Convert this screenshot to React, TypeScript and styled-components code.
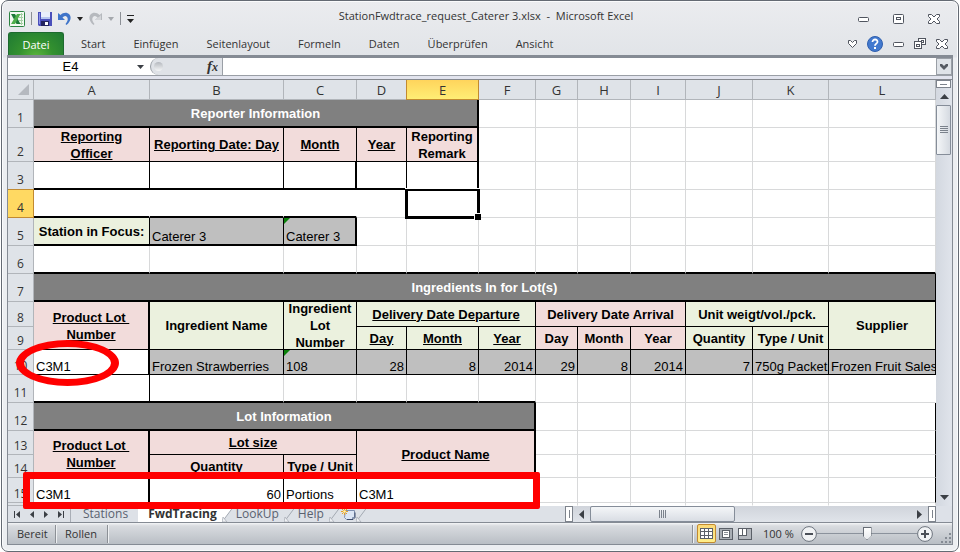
import React from 'react';
import styled, { createGlobalStyle, css } from 'styled-components';

const UI = '"Open Sans", "Noto Sans", sans-serif';
const SHEET = '"Liberation Sans", Arial, sans-serif';
const GRAY = '#808080';
const PINK = '#f2dcdb';
const GREEN = '#ebf1de';
const SILVER = '#bfbfbf';
const GRIDLINE = '#d8d9da';

const GlobalStyle = createGlobalStyle`
  * { box-sizing: border-box; }
  body { margin: 0; background: #fff; font-family: ${UI}; font-size: 11px; color: #333; }
  button, input { font: inherit; color: inherit; margin: 0; padding: 0; border: 0; background: none; }
  svg { display: block; flex: none; }
`;

/* ---------- window ---------- */

const Frame = styled.div`
  min-height: 100vh;
  margin: 0 1px;
  padding: 0 5px 6px;
  display: flex;
  flex-direction: column;
  border: 1px solid #646a73;
  border-radius: 7px;
  background: linear-gradient(#ebecef, #e1e4e8 56px, #eceef1 57px);
  box-shadow: inset 0 0 0 1px #fafbfc;
`;

const TitleBar = styled.header`
  display: flex;
  align-items: center;
  height: 31px;
  padding: 4px 13px 0 2px;
`;

const QuickAccess = styled.div`
  display: flex;
  align-items: center;
  gap: 6px;
`;

const Title = styled.h1`
  flex: 1;
  margin: 0 0 6px;
  padding-right: 20px;
  text-align: center;
  font-weight: 400;
  font-size: 11px;
  line-height: 16px;
  white-space: nowrap;
`;

const IconButton = styled.button`
  display: flex;
  align-items: center;
  justify-content: center;
`;

const WindowButtons = styled.div<{ $gap: number }>`
  display: flex;
  align-items: center;
  gap: ${(p) => p.$gap}px;
  margin-left: auto;
`;

const Divider = styled.span<{ $h: number; $dark?: boolean }>`
  width: 1px;
  height: ${(p) => p.$h}px;
  background: #8c9096;
  ${(p) => p.$dark && css`box-shadow: 1px 0 0 #eef0f2;`}
`;

const Ribbon = styled.nav`
  display: flex;
  align-items: stretch;
  height: 23px;
  padding: 0 5px 0 1px;
`;

const FileTab = styled.button`
  width: 56px;
  margin-right: 3px;
  border: 1px solid #1d6a2f;
  border-bottom: 0;
  border-radius: 3px 3px 0 0;
  background: radial-gradient(ellipse at 50% 110%, #5bb53c 0%, #34912f 45%, #1f7a33 100%);
  color: #fff;
  font-size: 11px;
`;

const RibbonTab = styled.button`
  padding: 0 14px;
  font-size: 11px;
  white-space: nowrap;
`;

const Client = styled.main`
  flex: 1;
  display: flex;
  flex-direction: column;
  border: solid #858b94;
  border-width: 3px 1px 1px;
`;

/* ---------- formula bar ---------- */

const FormulaBar = styled.div`
  display: flex;
  height: 22px;
  padding-bottom: 2px;
  background: #e2e4ee;
  border-bottom: 1px solid #85888f;
`;

const BarInner = styled.div`
  flex: 1;
  display: flex;
  height: 18px;
  border-bottom: 1px solid #9a9fa6;
  background: #fff;
`;

const NameBox = styled.div`
  display: flex;
  align-items: center;
  width: 141px;
  padding-right: 5px;
`;

const NameInput = styled.input`
  flex: 1;
  min-width: 0;
  && { padding-right: 4px; }
  text-align: center;
  font: 13px/17px ${SHEET};
  color: #000;
`;

const FxArea = styled.div`
  display: flex;
  align-items: center;
  justify-content: space-between;
  width: 73px;
  margin-left: 1px;
  padding: 0 4px 0 3px;
  border: solid #9a9fa6;
  border-width: 0 1px 0 1px;
  border-radius: 9px 0 0 9px;
  background: #dfe2e7;
`;

const Knob = styled.span`
  width: 9px;
  height: 9px;
  border-radius: 50%;
  background: linear-gradient(#b4b8be, #f5f6f7);
`;

const Fx = styled.button`
  font: italic bold 15px/16px "Liberation Serif", serif;
  color: #333;
  small { font-size: 12px; }
`;

const FormulaInput = styled.input`
  flex: 1;
  min-width: 0;
  font: 13px/17px ${SHEET};
`;

const ExpandButton = styled(IconButton)`
  width: 16px;
  border: 1px solid #9a9fa6;
  background: #dfe3e8;
`;

/* ---------- sheet ---------- */

const Workbook = styled.section`
  position: relative;
  display: flex;
  flex: 1;
`;

const SheetPane = styled.div`
  flex: 1;
  min-width: 0;
  overflow: hidden;
  background: #fff;
`;

const Grid = styled.table`
  width: 100%;
  table-layout: fixed;
  border-collapse: separate;
  border-spacing: 0;
  font: 13px/15px ${SHEET};
  color: #000;
`;

const Col = styled.col<{ $w?: number }>`
  ${(p) => p.$w && css`width: ${p.$w}px;`}
`;

const Row = styled.tr<{ $h: number }>`
  height: ${(p) => p.$h}px;
`;

const Heading = styled.th<{ $active?: boolean }>`
  padding: 0;
  font: 400 13px/18px ${UI};
  color: #333;
  background: #dfe3e8;
  border: solid #b1b5ba;
  border-width: 0 1px 1px 0;
`;

const ColumnHeading = styled(Heading)`
  ${(p) => p.$active && css`
    background: linear-gradient(#ffd45c, #ffee75);
    border-color: #c28a30;
    box-shadow: -1px 0 0 #c28a30;
  `}
`;

const RowHeading = styled(Heading)<{ $low?: boolean }>`
  vertical-align: bottom;
  font-size: 12px;
  line-height: 17px;
  padding: 0 0 ${(p) => (p.$low ? 0 : 1)}px;
  ${(p) => p.$active && css`
    background: #ffd962;
    border-color: #c28a30;
    box-shadow: 0 -1px 0 #c28a30;
  `}
`;

type Edge = 0 | 1 | 2 | 'g';
const edge = (e: Edge) =>
  e === 'g' ? `1px solid ${GRIDLINE}` : e === 0 ? '1px solid #fff' : `${e}px solid #000`;

const Cell = styled.td<{ $bg?: string; $r: Edge; $b: Edge; $align?: string; $head?: boolean; $selected?: boolean }>`
  position: relative;
  padding: 0 2px;
  white-space: pre;
  overflow: ${(p) => (p.$selected ? 'visible' : 'hidden')};
  background: ${(p) => p.$bg || '#fff'};
  color: ${(p) => (p.$bg === GRAY ? '#fff' : '#000')};
  border-right: ${(p) => edge(p.$r)};
  border-bottom: ${(p) => edge(p.$b)};
  text-align: ${(p) => p.$align || 'left'};
  vertical-align: ${(p) => (p.$head ? 'middle' : 'bottom')};
`;

const Caption = styled.div<{ $underline?: boolean }>`
  margin: -3px 0;
  font-weight: 700;
  line-height: 17px;
  text-decoration: ${(p) => (p.$underline ? 'underline' : 'none')};
`;

const ErrorFlag = styled.span`
  position: absolute;
  top: 0;
  left: 0;
  width: 6px;
  height: 6px;
  background: #0a800a;
  clip-path: polygon(0 0, 100% 0, 0 100%);
`;

const Selection = styled.span`
  position: absolute;
  z-index: 2;
  inset: -1px -2px -2px -2px;
  border: 3px solid #000;
  border-top-width: 2px;
  box-shadow: 0 -1px 0 #fff;
  &::after {
    content: '';
    position: absolute;
    right: -4px;
    bottom: -4px;
    width: 6px;
    height: 6px;
    background: #000;
    border: solid #fff;
    border-width: 1px 0 0 1px;
  }
`;

const EllipseMark = styled.span`
  position: absolute;
  z-index: 3;
  left: 8px;
  top: 260px;
  width: 103px;
  height: 46px;
  border: solid #f00;
  border-width: 7px 8px;
  border-radius: 50%;
`;

const BoxMark = styled.span`
  position: absolute;
  z-index: 3;
  left: 15px;
  top: 392px;
  width: 517px;
  height: 37px;
  border: 7px solid #f00;
  border-radius: 2px;
`;

/* ---------- scrolling ---------- */

const VScroll = styled.div`
  display: flex;
  flex-direction: column;
  width: 16px;
  background: linear-gradient(90deg, #d3d8e0, #e0e4eb);
`;

const SplitHandle = styled.span<{ $vertical?: boolean }>`
  flex: none;
  width: ${(p) => (p.$vertical ? 8 : 15)}px;
  height: ${(p) => (p.$vertical ? 16 : 8)}px;
  border: 1px solid #7d838c;
  background: #fff;
  display: flex;
  align-items: center;
  justify-content: center;
  &::after {
    content: '';
    width: ${(p) => (p.$vertical ? 1 : 7)}px;
    height: ${(p) => (p.$vertical ? 8 : 1)}px;
    background: #7d838c;
  }
`;

const VArrow = styled(IconButton)`
  height: 17px;
`;

const VThumb = styled.div`
  display: flex;
  align-items: center;
  justify-content: center;
  height: 50px;
  width: 15px;
  border: 1px solid #858d99;
  border-radius: 1px;
  background: linear-gradient(90deg, #f4f6f8, #d5dae1);
`;

const Spacer = styled.span`
  flex: 1;
`;

const BottomBar = styled.div`
  display: flex;
  height: 16px;
  background: #dde1e7;
`;

const SheetNav = styled.div`
  display: flex;
  align-items: center;
  justify-content: space-between;
  width: 62px;
  padding: 0 6px;
`;

const SheetTabs = styled.div`
  display: flex;
  flex: 1;
  min-width: 0;
  border-left: 1px solid #a9aeb6;
`;

const SheetTab = styled.button<{ $active?: boolean; $first?: boolean }>`
  padding: 0 ${(p) => (p.$first ? 10 : 5)}px 0 ${(p) => (p.$active ? 10 : p.$first ? 12 : 2)}px;
  font-size: 12px;
  line-height: 16px;
  color: ${(p) => (p.$active ? '#333' : '#5a6270')};
  font-weight: ${(p) => (p.$active ? 700 : 400)};
  background: ${(p) => (p.$active ? '#fff' : 'transparent')};
`;

const HScroll = styled.div`
  display: flex;
  width: 371px;
  background: linear-gradient(#d0d4db, #e0e4ea);
`;

const HArrow = styled(IconButton)`
  width: 17px;
`;

const HThumb = styled.div`
  display: flex;
  align-items: center;
  justify-content: center;
  width: 145px;
  border: 1px solid #858d99;
  border-radius: 2px;
  background: linear-gradient(#f4f6f8, #d9dde4);
`;

const ScrollCorner = styled.span`
  width: 16px;
  background: #dde1e8;
`;

/* ---------- status bar ---------- */

const StatusBar = styled.footer`
  display: flex;
  align-items: center;
  height: 22px;
  padding-left: 9px;
  border-top: 1px solid #858b94;
  background: linear-gradient(#f4f5f7, #d8dbdf 3px, #b9bec4);
  font-size: 11px;
`;

const StatusText = styled.span<{ $w: number; $pad?: number }>`
  width: ${(p) => p.$w}px;
  padding-left: ${(p) => p.$pad || 0}px;
`;

const ViewButtons = styled.div`
  display: flex;
  align-items: center;
  padding-left: 4px;
`;

const ViewButton = styled(IconButton)<{ $active?: boolean }>`
  width: 19px;
  height: 19px;
  ${(p) => p.$active && css`
    border: 1px solid #c28a30;
    border-radius: 2px;
    background: linear-gradient(#fbd977, #ffee8a);
  `}
`;

const ZoomLabel = styled.label`
  width: 47px;
  padding-left: 9px;
  white-space: nowrap;
`;

const ZoomSlider = styled.input`
  appearance: none;
  width: 100px;
  height: 18px;
  background: linear-gradient(#8b929c, #8b929c) center / 100% 1px no-repeat;
  &::-webkit-slider-thumb {
    appearance: none;
    width: 9px;
    height: 13px;
    background: linear-gradient(#fff, #e8eaed) center / 7px 11px no-repeat #666c75;
    clip-path: polygon(0 0, 100% 0, 100% 65%, 50% 100%, 0 65%);
  }
`;

const ResizeCorner = styled.span`
  display: flex;
  align-self: flex-end;
  padding-left: 8px;
`;

/* ---------- icons ---------- */

const Triangle = ({ d, w, h, fill = '#3b3f45' }: { d: string; w: number; h: number; fill?: string }) => (
  <svg width={w} height={h} aria-hidden="true"><path d={d} fill={fill} /></svg>
);

const Down = ({ fill = '#222' }: { fill?: string }) => <Triangle d="M0 0H6L3 4Z" w={6} h={4} fill={fill} />;

const ExcelIcon = () => (
  <svg width="16" height="16" aria-hidden="true">
    <rect x=".5" y=".5" width="15" height="15" rx="1" fill="#f3f9f1" stroke="#2d8442" />
    <path d="M10 3.500h4M10 6.500h4M10 9.500h4M10 12.500h4M12.500 2v12" stroke="#a6cfa5" />
    <path d="M2 3H6l5.500 10H7.500Z" fill="#1e7b38" />
    <path d="M11.500 3H8L2 13h4Z" fill="#4fae4b" />
  </svg>
);

const SaveIcon = () => (
  <svg width="14" height="14" aria-hidden="true">
    <path d="M0 0h14v14H1L0 13Z" fill="#4a4fbb" />
    <path d="M1 1h1v11H1Z" fill="#8b92e6" />
    <path d="M3 0h9v7H3Z" fill="#e9eefb" />
    <path d="M3 5h9v2H3Z" fill="#b6c5ee" />
    <path d="M3 9h8v5H3Z" fill="#23245f" />
    <path d="M7 10h3v3H7Z" fill="#fff" />
  </svg>
);

const UndoIcon = ({ redo }: { redo?: boolean }) => (
  <svg width="13" height="13" viewBox="0 0 13 13" aria-hidden="true">
    <g transform={redo ? 'translate(13 0) scale(-1 1)' : undefined} fill={redo ? '#b6b9be' : '#3f74c9'}>
      <path d="M0 1l2.500 2C5 .5 9 0 11.500 2.500c2 2.500 1.500 7-3 10.500l-1-1C9.500 9.500 10.500 7 9 5 7.500 3.500 6 4 4.500 5.500L7 8H0Z" />
      {redo && <path d="M4.500 5.500 7 8H1V3l2 2Z" fill="#d3d5d9" />}
    </g>
  </svg>
);

const MinimizeIcon = () => (
  <svg width="11" height="11" aria-hidden="true"><rect x=".5" y="4.500" width="10" height="4" rx="1" fill="#fff" stroke="#50555f" /></svg>
);

const MaximizeIcon = () => (
  <svg width="11" height="10" aria-hidden="true">
    <rect x=".5" y=".5" width="10" height="9" rx="1" fill="#fff" stroke="#50555f" />
    <rect x="3.500" y="3.500" width="4" height="2" fill="none" stroke="#50555f" />
  </svg>
);

const RestoreIcon = () => (
  <svg width="12" height="11" aria-hidden="true">
    <rect x="4.500" y=".5" width="7" height="6" fill="#fff" stroke="#50555f" />
    <rect x="7.500" y="2.500" width="2" height="2" fill="none" stroke="#50555f" />
    <rect x=".5" y="3.500" width="7" height="7" fill="#fff" stroke="#50555f" />
    <rect x="2.500" y="6.500" width="3" height="2" fill="none" stroke="#50555f" />
  </svg>
);

const CloseIcon = () => (
  <svg width="12" height="10" aria-hidden="true">
    <path d="M.5.5h3L6 3 8.500.5h3v2L9 5l2.500 2.500v2h-3L6 7 3.500 9.500h-3v-2L3 5 .5 2.500Z" fill="#fff" stroke="#50555f" />
  </svg>
);

const HeartChevron = () => (
  <svg width="9" height="8" aria-hidden="true">
    <path d="M.5.5h2l2 2 2-2h2v3l-4 4-4-4Z" fill="#fff" stroke="#50555f" />
  </svg>
);

const HelpIcon = () => (
  <svg width="16" height="16" aria-hidden="true">
    <circle cx="8" cy="8" r="7.500" fill="#4279cf" stroke="#2f5fae" />
    <path d="M5.500 6c0-3.500 5.300-3.200 5 0-.2 1.600-2.500 1.700-2.500 3.700" fill="none" stroke="#fff" strokeWidth="1.800" />
    <rect x="7" y="11" width="2" height="2" fill="#fff" />
  </svg>
);

const Grip = ({ vertical }: { vertical?: boolean }) => (
  <svg width="8" height="8" aria-hidden="true">
    <path d={vertical ? 'M.5 0v8M2.500 0v8M4.500 0v8M6.500 0v8' : 'M0 .5h8M0 2.500h8M0 4.500h8M0 6.500h8'} stroke="#7b828c" />
  </svg>
);

const Slant = ({ left }: { left?: string }) => (
  <svg width="12" height="16" aria-hidden="true">
    {left && <path d="M0 0H12L0 16Z" fill={left} />}
    <path d="M12 0 0 16" stroke="#a3a9b2" />
    <path d="M1 11l4 5H0Z" fill="#eef0f3" stroke="#a3a9b2" strokeWidth=".7" />
  </svg>
);

const NewSheetIcon = () => (
  <svg width="15" height="13" aria-hidden="true">
    <path d="M4.500 2.500h9v7h-2v2h-6l-2-2Z" fill="#dce6f5" stroke="#7f90b0" />
    <path d="M6 11.500h6l2-2v-5" fill="none" stroke="#3e4c6b" />
    <path d="M3.500 0v7M0 3.500h7M1 1l5 5M6 1 1 6" stroke="#e8a227" />
    <circle cx="3.500" cy="3.500" r="1.300" fill="#fff3b0" />
  </svg>
);

const ZoomIcon = ({ plus }: { plus?: boolean }) => (
  <svg width="16" height="16" aria-hidden="true">
    <circle cx="8" cy="8" r="7.400" fill="#f0f2f4" stroke="#6c737d" />
    <path d={plus ? 'M4 8h8M8 4v8' : 'M4 8h8'} stroke="#4a4f57" strokeWidth="2" />
  </svg>
);

const NormalViewIcon = () => (
  <svg width="13" height="11" aria-hidden="true">
    <rect x=".5" y=".5" width="12" height="10" fill="#fff" stroke="#5b6068" />
    <path d="M0 3.500h13M0 7.500h13M4.500 0v11M8.500 0v11" stroke="#5b6068" />
  </svg>
);

const PageLayoutIcon = () => (
  <svg width="14" height="12" aria-hidden="true">
    <rect x=".5" y=".5" width="13" height="11" fill="#a9aeb4" stroke="#5b6068" />
    <rect x="3.500" y="2.500" width="7" height="7" fill="#fff" stroke="#5b6068" />
    <path d="M5 4.500h4M5 6.500h4" stroke="#8a8f96" />
  </svg>
);

const PageBreakIcon = () => (
  <svg width="14" height="12" aria-hidden="true">
    <rect x=".5" y=".5" width="13" height="11" fill="#b4b8be" stroke="#5b6068" />
    <path d="M1 1h8v6H1Z" fill="#fff" />
    <path d="M4.500 0v7.500M8.500 0v7.500M0 7.500h9" stroke="#5b6068" fill="none" />
  </svg>
);

const SizeGrip = () => (
  <svg width="11" height="11" aria-hidden="true">
    <path d="M8 0h2v2H8ZM4 4h2v2H4ZM8 4h2v2H8ZM0 8h2v2H0ZM4 8h2v2H4ZM8 8h2v2H8Z" fill="#858b94" />
  </svg>
);

/* ---------- data ---------- */

const columns: [string, number?][] = [
  ['A', 116], ['B', 134], ['C', 73], ['D', 50], ['E', 72], ['F', 57],
  ['G', 42], ['H', 53], ['I', 55], ['J', 67], ['K', 76], ['L'],
];

interface CellData {
  t?: string;
  head?: boolean;
  u?: boolean;
  bg?: string;
  cs?: number;
  rs?: number;
  r?: Edge;
  b?: Edge;
  align?: string;
  flag?: boolean;
  selected?: boolean;
}

const blank = (n: number, extra: CellData = {}): CellData[] => Array.from({ length: n }, () => ({ ...extra }));
const h = (t: string, bg: string, extra: CellData = {}): CellData => ({ t, bg, head: true, align: 'center', r: 1, b: 1, ...extra });
const v = (t: string, extra: CellData = {}): CellData => ({ t, r: 1, b: 1, bg: SILVER, ...extra });
const LOT = 'Product Lot\u00a0\nNumber';

const rows: { h: number; cells: CellData[] }[] = [
  { h: 28, cells: [h('Reporter Information', GRAY, { cs: 5, r: 2, b: 2 }), ...blank(7)] },
  {
    h: 34,
    cells: [
      h('Reporting\nOfficer', PINK, { u: true }), h('Reporting Date: Day', PINK, { u: true }),
      h('Month', PINK, { u: true }), h('Year', PINK, { u: true }), h('Reporting\nRemark', PINK, { r: 2 }), ...blank(7),
    ],
  },
  { h: 28, cells: [{ r: 1, b: 2 }, { r: 1, b: 2 }, { r: 2, b: 2 }, { r: 1, b: 2 }, { r: 2, b: 0 }, ...blank(7)] },
  { h: 28, cells: [...blank(3, { r: 0, b: 2 }), { r: 0 }, { selected: true }, ...blank(7)] },
  {
    h: 28,
    cells: [
      h('Station in Focus:', GREEN, { b: 2 }), v('Caterer 3', { b: 2 }),
      v('Caterer 3', { b: 2, r: 2, flag: true }), ...blank(9),
    ],
  },
  { h: 28, cells: blank(12, { b: 2 }) },
  { h: 28, cells: [h('Ingredients In for Lot(s)', GRAY, { cs: 12, b: 2 })] },
  {
    h: 25,
    cells: [
      h(LOT, PINK, { u: true, rs: 2, r: 2 }), h('Ingredient Name', GREEN, { rs: 2 }),
      h('Ingredient\nLot\nNumber', GREEN, { rs: 2 }), h('Delivery Date Departure', GREEN, { u: true, cs: 3 }),
      h('Delivery Date Arrival', PINK, { cs: 3 }), h('Unit weigt/vol./pck.', GREEN, { cs: 2 }),
      h('Supplier', GREEN, { rs: 2 }),
    ],
  },
  {
    h: 23,
    cells: [
      h('Day', GREEN, { u: true }), h('Month', GREEN, { u: true }), h('Year', GREEN, { u: true }),
      h('Day', PINK), h('Month', PINK), h('Year', PINK), h('Quantity', GREEN), h('Type / Unit', GREEN),
    ],
  },
  {
    h: 25,
    cells: [
      v('C3M1', { bg: '#fff', r: 2 }), v('Frozen Strawberries'), v('108', { flag: true }),
      v('28', { align: 'right' }), v('8', { align: 'right' }), v('2014', { align: 'right' }),
      v('29', { align: 'right' }), v('8', { align: 'right' }), v('2014', { align: 'right' }),
      v('7', { align: 'right' }), v('750g Packet'), v('Frozen Fruit Sales'),
    ],
  },
  { h: 28, cells: [{ r: 1, b: 2 }, ...blank(5, { b: 2 }), ...blank(5), { r: 0 }] },
  { h: 28, cells: [h('Lot Information', GRAY, { cs: 6, r: 2, b: 2 }), ...blank(5), { r: 1 }] },
  {
    h: 24,
    cells: [
      h(LOT, PINK, { u: true, rs: 2, r: 2 }), h('Lot size', PINK, { u: true, cs: 2 }),
      h('Product Name', PINK, { u: true, cs: 3, rs: 2, r: 2 }), ...blank(5), { r: 1 },
    ],
  },
  { h: 23, cells: [h('Quantity', PINK), h('Type / Unit', PINK), ...blank(5), { r: 1 }] },
  {
    h: 25,
    cells: [
      v('C3M1', { bg: '#fff', r: 2 }), v('60', { bg: '#fff', align: 'right' }), v('Portions', { bg: '#fff' }),
      v('C3M1', { bg: '#fff', cs: 3, r: 2 }), ...blank(5), { r: 1 },
    ],
  },
  { h: 3, cells: blank(12, { b: 0 }) },
];

const menu = ['Start', 'Einfügen', 'Seitenlayout', 'Formeln', 'Daten', 'Überprüfen', 'Ansicht'];

export default function App() {
  return (
    <>
      <GlobalStyle />
      <Frame>
        <TitleBar>
          <QuickAccess>
            <ExcelIcon />
            <Divider $h={13} />
            <IconButton aria-label="Speichern"><SaveIcon /></IconButton>
            <IconButton aria-label="Rückgängig"><UndoIcon /></IconButton>
            <IconButton aria-label="Rückgängig-Liste"><Down /></IconButton>
            <IconButton aria-label="Wiederholen"><UndoIcon redo /></IconButton>
            <IconButton aria-label="Wiederholen-Liste"><Down fill="#a5a8ad" /></IconButton>
            <Divider $h={13} />
            <IconButton aria-label="Symbolleiste anpassen">
              <Triangle d="M0 0H7V1H0ZM0 4H7L3.500 8Z" w={7} h={8} fill="#222" />
            </IconButton>
          </QuickAccess>
          <Title>StationFwdtrace_request_Caterer 3.xlsx&nbsp; -&nbsp; Microsoft Excel</Title>
          <WindowButtons $gap={24}>
            <IconButton aria-label="Minimieren"><MinimizeIcon /></IconButton>
            <IconButton aria-label="Maximieren"><MaximizeIcon /></IconButton>
            <IconButton aria-label="Schließen"><CloseIcon /></IconButton>
          </WindowButtons>
        </TitleBar>

        <Ribbon>
          <FileTab>Datei</FileTab>
          {menu.map((m) => <RibbonTab key={m}>{m}</RibbonTab>)}
          <WindowButtons $gap={10}>
            <IconButton aria-label="Menüband einblenden"><HeartChevron /></IconButton>
            <IconButton aria-label="Hilfe"><HelpIcon /></IconButton>
            <IconButton aria-label="Mappe minimieren"><MinimizeIcon /></IconButton>
            <IconButton aria-label="Mappe wiederherstellen"><RestoreIcon /></IconButton>
            <IconButton aria-label="Mappe schließen"><CloseIcon /></IconButton>
          </WindowButtons>
        </Ribbon>

        <Client>
          <FormulaBar>
            <BarInner>
              <NameBox>
                <NameInput aria-label="Namenfeld" defaultValue="E4" />
                <IconButton aria-label="Namenliste"><Triangle d="M0 0H7L3.500 4Z" w={7} h={4} /></IconButton>
              </NameBox>
              <FxArea>
                <Knob />
                <Fx aria-label="Funktion einfügen">f<small>x</small></Fx>
              </FxArea>
              <FormulaInput aria-label="Bearbeitungsleiste" />
              <ExpandButton aria-label="Bearbeitungsleiste erweitern">
                <Triangle d="M0 0H2L4 2 6 0H8V2L4 6 0 2Z" w={8} h={6} fill="#555a62" />
              </ExpandButton>
            </BarInner>
          </FormulaBar>

          <Workbook>
            <SheetPane>
              <Grid>
                <colgroup>
                  <Col $w={26} />
                  {columns.map(([name, w]) => <Col key={name} $w={w} />)}
                </colgroup>
                <thead>
                  <Row $h={20}>
                    <Heading aria-label="Alles markieren">
                      <svg width="22" height="13" aria-hidden="true"><path d="M21 1V12H10Z" fill="#b5b9bf" /></svg>
                    </Heading>
                    {columns.map(([name]) => (
                      <ColumnHeading key={name} scope="col" $active={name === 'E'}>{name}</ColumnHeading>
                    ))}
                  </Row>
                </thead>
                <tbody>
                  {rows.map((row, i) => (
                    <Row key={i} $h={row.h}>
                      <RowHeading scope="row" $active={i === 3} $low={row.h < 28}>{row.h > 3 ? i + 1 : null}</RowHeading>
                      {row.cells.map((c, j) => (
                        <Cell
                          key={j}
                          colSpan={c.cs}
                          rowSpan={c.rs}
                          $bg={c.bg}
                          $r={c.r ?? 'g'}
                          $b={c.b ?? 'g'}
                          $align={c.align}
                          $head={c.head}
                          $selected={c.selected}
                        >
                          {c.flag && <ErrorFlag />}
                          {c.selected && <Selection />}
                          {c.head ? <Caption $underline={c.u}>{c.t}</Caption> : c.t}
                        </Cell>
                      ))}
                    </Row>
                  ))}
                </tbody>
              </Grid>
            </SheetPane>
            <VScroll>
              <SplitHandle />
              <VArrow aria-label="Nach oben"><Triangle d="M4.500 0L9 5H0Z" w={9} h={5} /></VArrow>
              <VThumb><Grip /></VThumb>
              <Spacer />
              <VArrow aria-label="Nach unten"><Triangle d="M0 0H9L4.500 5Z" w={9} h={5} /></VArrow>
            </VScroll>
            <EllipseMark />
            <BoxMark />
          </Workbook>

          <BottomBar>
            <SheetNav>
              <IconButton aria-label="Erstes Blatt"><Triangle d="M0 0H1V7H0ZM6 0V7L2 3.500Z" w={6} h={7} /></IconButton>
              <IconButton aria-label="Voriges Blatt"><Triangle d="M4 0V7L0 3.500Z" w={4} h={7} /></IconButton>
              <IconButton aria-label="Nächstes Blatt"><Triangle d="M0 0L4 3.500 0 7Z" w={4} h={7} /></IconButton>
              <IconButton aria-label="Letztes Blatt"><Triangle d="M0 0L4 3.500 0 7ZM5 0H6V7H5Z" w={6} h={7} /></IconButton>
            </SheetNav>
            <SheetTabs>
              <SheetTab $first>Stations</SheetTab>
              <SheetTab $active>FwdTracing</SheetTab>
              <Slant left="#fff" />
              <SheetTab>LookUp</SheetTab>
              <Slant />
              <SheetTab>Help</SheetTab>
              <Slant />
              <IconButton aria-label="Tabellenblatt einfügen"><NewSheetIcon /></IconButton>
              <Slant />
            </SheetTabs>
            <HScroll>
              <SplitHandle $vertical />
              <HArrow aria-label="Nach links"><Triangle d="M5 0V9L0 4.500Z" w={5} h={9} /></HArrow>
              <HThumb><Grip vertical /></HThumb>
              <Spacer />
              <HArrow aria-label="Nach rechts"><Triangle d="M0 0L5 4.500 0 9Z" w={5} h={9} /></HArrow>
              <SplitHandle $vertical />
            </HScroll>
            <ScrollCorner />
          </BottomBar>

          <StatusBar>
            <StatusText $w={38}>Bereit</StatusText>
            <Divider $h={18} $dark />
            <StatusText $w={51} $pad={9}>Rollen</StatusText>
            <Divider $h={18} $dark />
            <Spacer />
            <Divider $h={18} $dark />
            <ViewButtons>
              <ViewButton $active aria-label="Normal"><NormalViewIcon /></ViewButton>
              <ViewButton aria-label="Seitenlayout"><PageLayoutIcon /></ViewButton>
              <ViewButton aria-label="Umbruchvorschau"><PageBreakIcon /></ViewButton>
            </ViewButtons>
            <ZoomLabel htmlFor="zoom">100 %</ZoomLabel>
            <IconButton aria-label="Verkleinern"><ZoomIcon /></IconButton>
            <ZoomSlider id="zoom" type="range" min="0" max="100" defaultValue="50" />
            <IconButton aria-label="Vergrößern"><ZoomIcon plus /></IconButton>
            <ResizeCorner><SizeGrip /></ResizeCorner>
          </StatusBar>
        </Client>
      </Frame>
    </>
  );
}
